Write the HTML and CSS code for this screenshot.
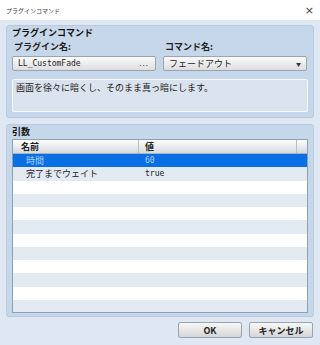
FILE: index.html
```html
<!DOCTYPE html>
<html lang="ja">
<head>
    <meta charset="UTF-8">
    <title>プラグインコマンド</title>
    <link rel="stylesheet" href="styles.css">
</head>
<body>
    <div class="dialog">
        <div class="titlebar">
            <span class="title">プラグインコマンド</span>
            <span class="close">×</span>
        </div>

        <div class="content">
            <div class="group group-command">
                <div class="group-title">プラグインコマンド</div>
                <div class="fields">
                    <div class="field">
                        <div class="label">プラグイン名:</div>
                        <div class="input mono">
                            <span>LL_CustomFade</span>
                            <span class="dots">...</span>
                        </div>
                    </div>
                    <div class="field">
                        <div class="label">コマンド名:</div>
                        <div class="input select">
                            <span>フェードアウト</span>
                            <span class="arrow">▼</span>
                        </div>
                    </div>
                </div>
                <div class="description">画面を徐々に暗くし、そのまま真っ暗にします。</div>
            </div>

            <div class="group group-args">
                <div class="group-title">引数</div>
                <div class="table">
                    <div class="row head">
                        <div class="cell name">名前</div>
                        <div class="cell value">値</div>
                        <div class="cell spare"></div>
                    </div>
                    <div class="row selected">
                        <div class="cell name">時間</div>
                        <div class="cell value mono">60</div>
                    </div>
                    <div class="row">
                        <div class="cell name">完了までウェイト</div>
                        <div class="cell value mono">true</div>
                    </div>
                    <div class="row"></div>
                    <div class="row"></div>
                    <div class="row"></div>
                    <div class="row"></div>
                    <div class="row"></div>
                    <div class="row"></div>
                    <div class="row"></div>
                    <div class="row"></div>
                    <div class="row"></div>
                    <div class="row"></div>
                    <div class="row"></div>
                </div>
            </div>

            <div class="actions">
                <button class="btn">OK</button>
                <button class="btn">キャンセル</button>
            </div>
        </div>
    </div>
</body>
</html>
```

FILE: styles.css
```css
body {
    margin: 0;
    width: 320px;
    height: 345px;
    overflow: hidden;
    background-color: #dfe8f2;
    font-family: "Noto Sans CJK JP", "Noto Sans", sans-serif;
    color: #222;
}

.dialog {
    width: 320px;
    height: 345px;
}

.titlebar {
    height: 20px;
    background-color: #fff;
    display: flex;
    align-items: center;
    justify-content: space-between;
    padding: 0 6px;
}

.title {
    font-size: 6px;
    color: #333;
}

.close {
    font-size: 11px;
    color: #444;
    font-family: "DejaVu Sans", sans-serif;
}

.content {
    padding: 5px 6px 0 6px;
}

.group {
    background-color: #c7d7ea;
    border: 1px solid #b7cae0;
    border-radius: 3px;
    padding: 1px 5px 5px 5px;
}

.group-command {
    height: 85px;
}

.group-args {
    margin-top: 6px;
    height: 185px;
}

.group-title {
    font-size: 9px;
    font-weight: bold;
    line-height: 12px;
    color: #111;
}

.fields {
    display: flex;
    gap: 7px;
}

.field {
    width: 144px;
}

.label {
    font-size: 9px;
    font-weight: bold;
    line-height: 12px;
    padding-left: 2px;
    margin-top: 2px;
    color: #222;
}

.input {
    height: 13px;
    margin-top: 3px;
    border: 1px solid #9aa4b0;
    border-radius: 2px;
    background: linear-gradient(#fbfbfb, #dedede);
    display: flex;
    align-items: center;
    justify-content: space-between;
    padding: 0 5px;
    font-size: 9px;
}

.mono {
    font-family: "DejaVu Sans Mono", monospace;
    font-size: 8px;
}

.dots {
    font-size: 7px;
    letter-spacing: -1px;
    color: #333;
    padding-right: 2px;
}

.select {
    font-family: "Noto Sans CJK JP", sans-serif;
}

.arrow {
    font-size: 5px;
    color: #333;
}

.description {
    margin-top: 8px;
    height: 29px;
    border: 1px solid #f4f7fb;
    border-radius: 2px;
    background-color: #dbe3ee;
    font-size: 9px;
    line-height: 14px;
    padding: 1px 3px;
    width: 288px;
}

.table {
    margin-top: 1px;
    height: 172px;
    border: 1px solid #8da0b6;
    background-color: #fff;
    overflow: hidden;
}

.row {
    height: 13.25px;
    display: flex;
    font-size: 9px;
    line-height: 13px;
}

.row:nth-child(odd) {
    background-color: #e4eaf2;
}

.row.head {
    height: 13px;
    background: linear-gradient(#fdfdfd, #d6dbe1);
    border-bottom: 1px solid #a9b3bf;
    font-weight: bold;
}

.row.selected {
    background-color: #0a6fe2;
    color: #a9d2ff;
    width: 294px;
}

.cell {
    white-space: nowrap;
}

.name {
    width: 126px;
    padding-left: 13px;
    box-sizing: border-box;
}

.head .name {
    padding-left: 8px;
}

.value {
    width: 158px;
    padding-left: 6px;
    box-sizing: border-box;
}

.head .name,
.head .value {
    border-right: 1px solid #b5bec9;
}

.spare {
    flex: 1;
}

.actions {
    display: flex;
    justify-content: flex-end;
    gap: 7px;
    margin-top: 5px;
    padding-right: 1px;
}

.btn {
    width: 64px;
    height: 16px;
    padding: 0;
    border: 1px solid #9aa4ae;
    border-radius: 2px;
    background: linear-gradient(#f8f8f8, #d5d5d5);
    font-family: "Noto Sans CJK JP", sans-serif;
    font-size: 9px;
    font-weight: bold;
    color: #222;
}
```
